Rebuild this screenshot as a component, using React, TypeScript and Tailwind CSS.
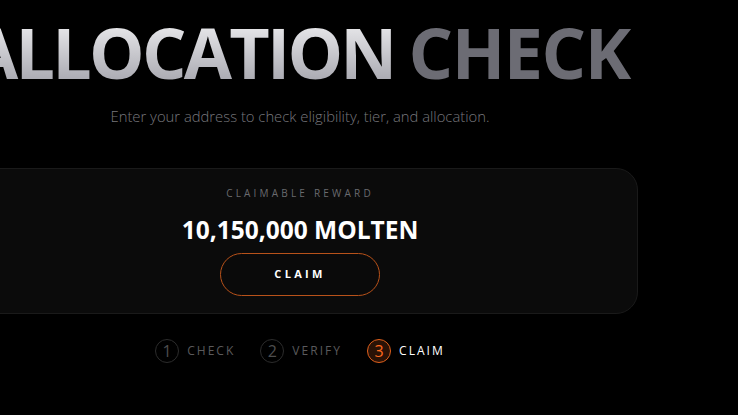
import type React from "react";

const steps = [
  { n: 1, label: "CHECK", active: false },
  { n: 2, label: "VERIFY", active: false },
  { n: 3, label: "CLAIM", active: true },
];

const StepItem: React.FC<{ n: number; label: string; active: boolean }> = ({ n, label, active }) => {
  return (
    <div className="flex items-center gap-[8px]">
      <div
        className={
          active
            ? "w-[24px] h-[24px] rounded-full border border-[#e0601c] bg-[#2a1206] text-[#ff6a1f] flex items-center justify-center text-[16px] leading-none"
            : "w-[24px] h-[24px] rounded-full border border-[#2c2c2c] text-[#4e4e4e] flex items-center justify-center text-[16px] leading-none"
        }
      >
        {n}
      </div>
      <span
        className={
          active
            ? "text-[12px] tracking-[0.17em] text-white"
            : "text-[12px] tracking-[0.17em] text-[#5a5a5c]"
        }
      >
        {label}
      </span>
    </div>
  );
};

export default function App() {
  return (
    <div
      className="w-[738px] h-[415px] bg-black overflow-hidden"
      style={{ fontFamily: "'Open Sans', 'Noto Sans', sans-serif" }}
    >
      <div className="w-[600px] flex flex-col items-center">
        {/* Title */}
        <h1 className="mt-[17px] whitespace-nowrap text-[70px] leading-none font-bold tracking-[-0.04em] flex gap-[14px]">
          <span className="bg-gradient-to-b from-[#f0f0f2] to-[#a4a4ac] bg-clip-text text-transparent">
            ALLOCATION
          </span>
          <span className="text-[#6c6c74] tracking-[-0.02em]">CHECK</span>
        </h1>

        <p className="mt-[18px] text-[14.8px] leading-[22px] font-light text-[#77777c]">
          Enter your address to check eligibility, tier, and allocation.
        </p>

        {/* Reward card */}
        <div className="mt-[41px] w-[676px] h-[146px] shrink-0 rounded-[22px] bg-[#0b0b0b] border border-[#1a1a1a] flex flex-col items-center pt-[17px]">
          <div className="text-[10px] leading-[15px] tracking-[0.32em] text-[#6a6a6e]">CLAIMABLE REWARD</div>
          <div className="mt-[14px] text-[24.5px] leading-[30px] font-bold text-white">10,150,000 MOLTEN</div>
          <button className="mt-[8px] w-[160px] h-[43px] rounded-full border border-[#b8521a] bg-[#0a0a0a] text-[11px] font-bold tracking-[0.3em] text-white">
            CLAIM
          </button>
        </div>

        {/* Steps */}
        <div className="mt-[25px] flex items-center gap-[25px]">
          {steps.map((s) => (
            <StepItem key={s.n} n={s.n} label={s.label} active={s.active} />
          ))}
        </div>
      </div>
    </div>
  );
}
